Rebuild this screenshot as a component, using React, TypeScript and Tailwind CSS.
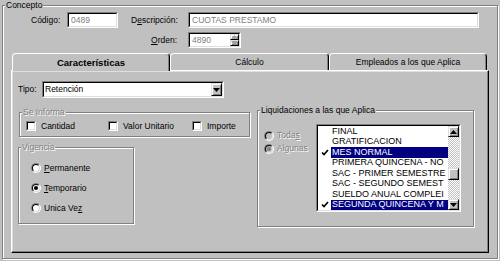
import React from "react";

const disabledText = "text-[#808080] [text-shadow:1px_1px_0_#fff]";

function Sunken({ className = "", inner = "", children }: { className?: string; inner?: string; children?: React.ReactNode }) {
  return (
    <div className={`border border-t-[#808080] border-l-[#808080] border-b-white border-r-white ${className}`}>
      <div className={`h-full w-full border border-t-black border-l-black border-b-[#dfdfdf] border-r-[#dfdfdf] ${inner}`}>
        {children}
      </div>
    </div>
  );
}

function Raised({ className = "", children }: { className?: string; children?: React.ReactNode }) {
  return (
    <div
      className={`flex items-center justify-center border border-t-[#dfdfdf] border-l-[#dfdfdf] border-b-black border-r-black bg-[#c0c0c0] shadow-[inset_1px_1px_0_#fff,inset_-1px_-1px_0_#808080] ${className}`}
    >
      {children}
    </div>
  );
}

function Arrow({ up = false, color = "#000" }: { up?: boolean; color?: string }) {
  return (
    <svg width="7" height="4" viewBox="0 0 7 4">
      <polygon points={up ? "0,4 7,4 3.5,0" : "0,0 7,0 3.5,4"} fill={color} />
    </svg>
  );
}

function Group({ label, disabled = false, className = "", children }: { label: string; disabled?: boolean; className?: string; children?: React.ReactNode }) {
  return (
    <div className={`relative border border-[#808080] shadow-[inset_1px_1px_0_#fff,1px_1px_0_#fff] ${className}`}>
      <span className={`absolute -top-[6px] left-[2px] bg-[#c0c0c0] px-px leading-[10px] ${disabled ? disabledText : "text-black"}`}>
        {label}
      </span>
      {children}
    </div>
  );
}

function CheckBox({ label, className = "" }: { label: string; className?: string }) {
  return (
    <div className={`flex items-center ${className}`}>
      <Sunken className="h-[10px] w-[10px]" inner="bg-white" />
      <span className="ml-[5px]">{label}</span>
    </div>
  );
}

function Radio({ checked = false, disabled = false, children }: { checked?: boolean; disabled?: boolean; children: React.ReactNode }) {
  return (
    <div className="flex items-center">
      <div className="h-[10px] w-[10px] rounded-full border border-t-[#808080] border-l-[#808080] border-b-white border-r-white">
        <div
          className={`flex h-full w-full items-center justify-center rounded-full border border-t-black border-l-black border-b-[#dfdfdf] border-r-[#dfdfdf] ${disabled ? "bg-[#c0c0c0]" : "bg-white"}`}
        >
          {checked && <div className={`h-[4px] w-[4px] rounded-full ${disabled ? "bg-[#808080]" : "bg-black"}`} />}
        </div>
      </div>
      <span className={`ml-[3px] ${disabled ? disabledText : ""}`}>{children}</span>
    </div>
  );
}

function Tab({ selected = false, className = "", children }: { selected?: boolean; className?: string; children: React.ReactNode }) {
  return (
    <div
      className={`flex items-center justify-center rounded-t-[4px] border-t border-l border-r border-t-white border-l-white border-r-black bg-[#c0c0c0] shadow-[inset_-1px_0_0_#808080] ${
        selected ? "relative z-10 h-[18px] text-[9.5px] font-bold" : "h-[17px]"
      } ${className}`}
    >
      {children}
    </div>
  );
}

function Check() {
  return (
    <svg width="8" height="7" viewBox="0 0 8 7">
      <path d="M1 3.5 L3 5.5 L7 1" stroke="#000" strokeWidth="1.7" fill="none" />
    </svg>
  );
}

const liquidaciones = [
  { name: "FINAL" },
  { name: "GRATIFICACION" },
  { name: "MES NORMAL", on: true },
  { name: "PRIMERA QUINCENA - NO" },
  { name: "SAC - PRIMER SEMESTRE" },
  { name: "SAC - SEGUNDO SEMEST" },
  { name: "SUELDO ANUAL COMPLEI" },
  { name: "SEGUNDA QUINCENA Y M", on: true },
];

export default function App() {
  return (
    <div className="h-[261px] w-[500px] overflow-hidden bg-[#c0c0c0] pl-[2px] pt-[5px] font-['Liberation_Sans',Arial,sans-serif] text-[8.5px] leading-none text-black">
      <Group label="Concepto" className="h-[254px] w-[496px]">
        <div className="flex flex-col">
          {/* Código / Descripción */}
          <div className="mt-[6px] flex h-[16px] items-center">
            <span className="ml-[28px] w-[36px]">Código:</span>
            <Sunken className="h-[16px] w-[51px]" inner="flex items-center bg-white pl-[2px] text-[#808080]">
              0489
            </Sunken>
            <span className="ml-[13px] w-[57px]">
              D<span className="underline">e</span>scripción:
            </span>
            <Sunken className="h-[16px] w-[291px]" inner="flex items-center bg-white pl-[2px] text-[#808080]">
              CUOTAS PRESTAMO
            </Sunken>
          </div>

          {/* Orden */}
          <div className="mt-[4px] flex h-[16px] items-center">
            <span className="ml-[148px] w-[37px]">
              <span className="underline">O</span>rden:
            </span>
            <Sunken className="h-[16px] w-[53px]" inner="flex items-stretch bg-white">
              <span className="flex flex-1 items-center pl-[2px] text-[#808080]">4890</span>
              <div className="flex w-[9px] flex-col">
                <Raised className="flex-1">
                  <Arrow up color="#a0a0a0" />
                </Raised>
                <Raised className="flex-1">
                  <Arrow color="#a0a0a0" />
                </Raised>
              </div>
            </Sunken>
          </div>

          {/* Tabs */}
          <div className="ml-[9px] mt-[5px] flex h-[17px] items-start">
            <Tab selected className="w-[158px]">
              Características
            </Tab>
            <Tab className="w-[159px]">Cálculo</Tab>
            <Tab className="w-[158px]">Empleados a los que Aplica</Tab>
          </div>

          {/* Tab panel */}
          <div className="ml-[8px] h-[183px] w-[478px] border border-t-white border-l-white border-b-black border-r-black shadow-[inset_-1px_-1px_0_#808080,inset_1px_1px_0_#dfdfdf]">
            <div className="flex">
              <div className="ml-[6px] flex flex-col">
                <div className="mt-[10px] flex h-[17px] items-center">
                  <span className="w-[24px]">Tipo:</span>
                  <Sunken className="h-[17px] w-[182px]" inner="flex items-center bg-white">
                    <span className="flex-1 pl-[1px]">Retención</span>
                    <Raised className="h-[13px] w-[11px]">
                      <Arrow />
                    </Raised>
                  </Sunken>
                </div>

                <Group label="Se Informa" disabled className="ml-[1px] mt-[14px] h-[25px] w-[231px]">
                  <div className="ml-[6px] mt-[8px] flex">
                    <CheckBox label="Cantidad" className="w-[82px]" />
                    <CheckBox label="Valor Unitario" className="w-[84px]" />
                    <CheckBox label="Importe" />
                  </div>
                </Group>

                <Group label="Vigencia" disabled className="mt-[10px] h-[77px] w-[116px]">
                  <div className="ml-[12px] mt-[10px] flex flex-col">
                    <div className="flex h-[20px] items-center">
                      <Radio>
                        <span className="underline">P</span>ermanente
                      </Radio>
                    </div>
                    <div className="flex h-[20px] items-center">
                      <Radio checked>
                        <span className="underline">T</span>emporario
                      </Radio>
                    </div>
                    <div className="flex h-[20px] items-center">
                      <Radio>
                        Unica Ve<span className="underline">z</span>
                      </Radio>
                    </div>
                  </div>
                </Group>
              </div>

              <Group label="Liquidaciones a las que Aplica" className="ml-[7px] mt-[39px] h-[117px] w-[217px]">
                <div className="flex">
                  <div className="ml-[6px] mt-[18px] flex w-[52px] flex-col">
                    <div className="flex h-[13px] items-center">
                      <Radio disabled>
                        Toda<span className="underline">s</span>
                      </Radio>
                    </div>
                    <div className="flex h-[13px] items-center">
                      <Radio disabled checked>
                        Algunas
                      </Radio>
                    </div>
                  </div>
                  <Sunken className="mt-[13px] h-[88px] w-[145px]" inner="flex bg-white">
                    <div className="flex w-[130px] flex-col">
                      {liquidaciones.map((l) => (
                        <div key={l.name} className="flex h-[10.5px] items-center">
                          <div className="flex w-[13px] justify-center">{l.on && <Check />}</div>
                          <div
                            className={`flex h-full flex-1 items-center overflow-hidden whitespace-nowrap pl-px text-[9px] ${
                              l.on ? "bg-[#000080] text-white" : ""
                            }`}
                          >
                            {l.name}
                          </div>
                        </div>
                      ))}
                    </div>
                    <div className="flex w-[11px] flex-col bg-[repeating-conic-gradient(#c0c0c0_0_25%,#ffffff_0_50%)] bg-[length:2px_2px]">
                      <Raised className="h-[11px]">
                        <Arrow up />
                      </Raised>
                      <Raised className="mt-[31px] h-[12px]" />
                      <div className="flex-1" />
                      <Raised className="h-[11px]">
                        <Arrow />
                      </Raised>
                    </div>
                  </Sunken>
                </div>
              </Group>
            </div>
          </div>
        </div>
      </Group>
    </div>
  );
}
